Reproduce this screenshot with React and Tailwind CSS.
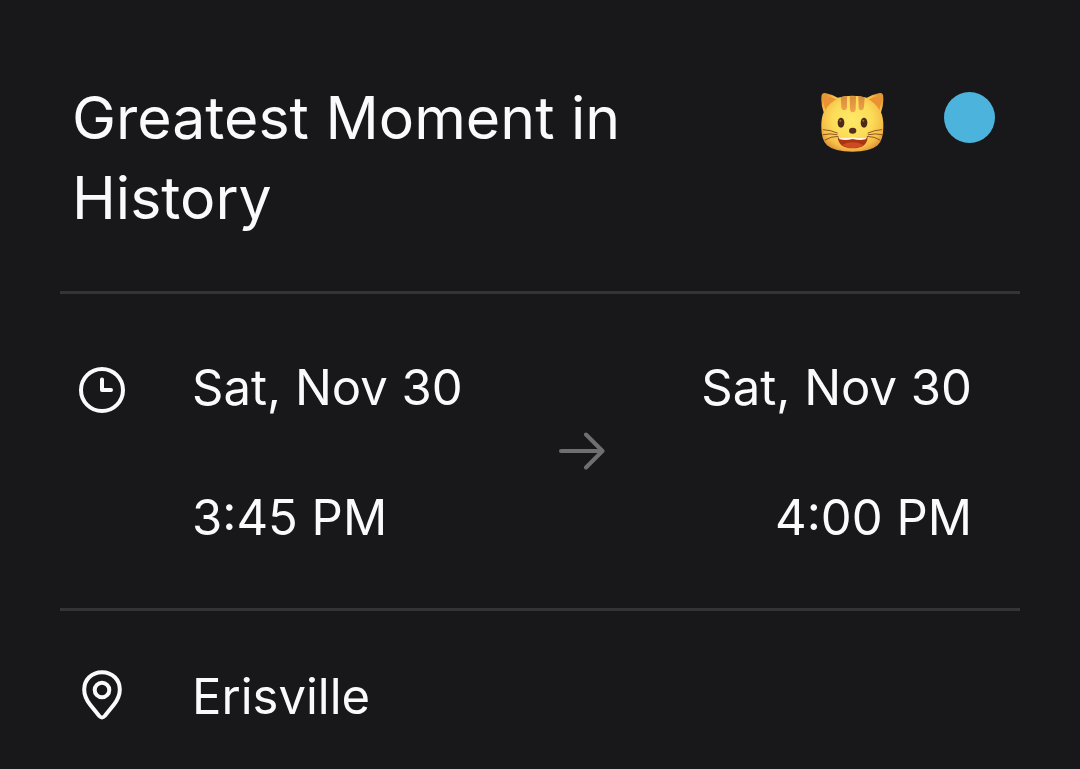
function CatIcon() {
  return (
    <svg viewBox="30 33 192 180" className="h-[60px] w-16 shrink-0" role="img" aria-label="Smiling cat">
      <defs>
        <radialGradient id="face" cx="0.5" cy="0.45" r="0.58">
          <stop offset="0" stopColor="#fde968" />
          <stop offset="0.55" stopColor="#fbdc58" />
          <stop offset="0.85" stopColor="#f6be48" />
          <stop offset="1" stopColor="#e29a38" />
        </radialGradient>
        <linearGradient id="stripe" x1="0" y1="0" x2="0" y2="1">
          <stop offset="0" stopColor="#d98a3c" />
          <stop offset="1" stopColor="#f0a548" />
        </linearGradient>
      </defs>
      <path
        d="M35 42 Q38 34 48 37 Q68 41 83 50 Q104 44 127 44 Q150 44 171 50 Q186 41 206 37 Q217 34 219 42 Q223 66 213 94 Q221 112 220 140 Q220 175 203 193 Q181 212 127 212 Q73 212 51 193 Q34 176 34 140 Q33 112 41 94 Q31 66 35 42Z"
        fill="url(#face)"
      />
      <path d="M41 44 Q61 45 79 55 Q58 67 46 87 Q38 64 41 44Z" fill="#ea9334" />
      <path d="M214 44 Q194 45 176 55 Q196 67 208 87 Q216 64 214 44Z" fill="#ea9334" />
      <path d="M92 49 Q101 46 111 46 V79 Q110 88 102 88 Q95 88 94 79Z M119 46 H138 L137 84 Q136 94 128 94 Q121 94 120 84Z M145 46 Q155 47 164 49 L162 79 Q160 88 153 88 Q146 88 146 79Z" fill="url(#stripe)" />
      <ellipse cx="93" cy="125" rx="10" ry="15" fill="#4c2b16" />
      <ellipse cx="162" cy="125" rx="10" ry="15" fill="#4c2b16" />
      <circle cx="91" cy="119" r="3" fill="#9b6a3a" />
      <circle cx="160" cy="119" r="3" fill="#9b6a3a" />
      <ellipse cx="128" cy="149" rx="11" ry="9" fill="#53301b" />
      <path d="M83 168 Q105 175 127 170 Q150 175 173 168 Q171 202 128 202 Q86 202 83 168Z" fill="#a93312" />
      <path d="M85 168 Q106 174 127 169 Q150 174 171 168 L167 175 Q149 179 128 174 Q107 179 89 175Z" fill="#fff6df" />
      <path d="M97 191 Q128 177 159 191 Q148 201 128 201 Q108 201 97 191Z" fill="#cf4a24" />
      <g fill="none" stroke="#8f5520" strokeWidth="3" strokeLinecap="round">
        <path d="M40 146 Q61 147 82 156 M39 161 Q60 156 81 161 M45 177 Q62 166 84 166" />
        <path d="M215 146 Q194 147 174 156 M216 161 Q196 156 175 161 M210 177 Q193 166 172 166" />
      </g>
    </svg>
  );
}

function ClockIcon() {
  return (
    <svg viewBox="0 0 48 48" className="size-12 shrink-0" fill="none" stroke="currentColor" strokeWidth="4" strokeLinecap="round" strokeLinejoin="round" aria-hidden="true">
      <circle cx="24" cy="24" r="21" />
      <path d="M24 13.500 V24 H33" />
    </svg>
  );
}

function PinIcon() {
  return (
    <svg viewBox="0 0 48 52" className="h-[52px] w-12 shrink-0" fill="none" stroke="currentColor" strokeWidth="4" strokeLinecap="round" strokeLinejoin="round" aria-hidden="true">
      <path d="M24 3.200 C13.500 3.200 6.200 11 6.200 20.500 C6.200 26.500 8.500 31 12 35.500 L21.300 47 Q24 50 26.700 47 L36 35.500 C39.500 31 41.800 26.500 41.800 20.500 C41.800 11 34.500 3.200 24 3.200Z" />
      <circle cx="24" cy="21" r="7.300" />
    </svg>
  );
}

function ArrowIcon() {
  return (
    <svg viewBox="0 0 46 38" className="h-[38px] w-[46px] shrink-0 text-[#6f6f71]" fill="none" stroke="currentColor" strokeWidth="4" strokeLinecap="round" strokeLinejoin="round" aria-label="to" role="img">
      <path d="M2 19 H43 M27 2.500 L43.500 19 L27 35.500" />
    </svg>
  );
}

export default function App() {
  return (
    <main className="min-h-screen bg-[#18181a] px-[60px] pt-[78px] font-['Inter',sans-serif] text-[#fafafc]">
      <header className="flex items-start justify-between border-b-3 border-[#343436] pr-[25px] pb-[53px] pl-3">
        <h1 className="max-w-[600px] text-[59px] leading-[80px]">Greatest Moment in History</h1>
        <div className="flex items-start gap-[60px] pt-[14px]">
          <CatIcon />
          <span className="size-[51px] rounded-full bg-[#4bb3dc]" role="img" aria-label="Blue calendar" />
        </div>
      </header>

      <section className="flex items-start border-b-3 border-[#343436] pt-[62px] pr-12 pb-[58px] pl-[18px] text-[49px] leading-[64px]">
        <div className="flex h-[68px] items-center">
          <ClockIcon />
        </div>
        <div className="ml-[66px] flex flex-1 items-center justify-between">
          <div className="flex flex-col gap-[66px]">
            <span>Sat, Nov 30</span>
            <span>3:45 PM</span>
          </div>
          <div className="pb-1">
            <ArrowIcon />
          </div>
          <div className="flex flex-col gap-[66px] text-right">
            <span>Sat, Nov 30</span>
            <span>4:00 PM</span>
          </div>
        </div>
      </section>

      <section className="flex items-start pt-[54px] pl-[18px] text-[49px] leading-[64px]">
        <div className="pt-1">
          <PinIcon />
        </div>
        <span className="ml-[66px]">Erisville</span>
      </section>
    </main>
  );
}
